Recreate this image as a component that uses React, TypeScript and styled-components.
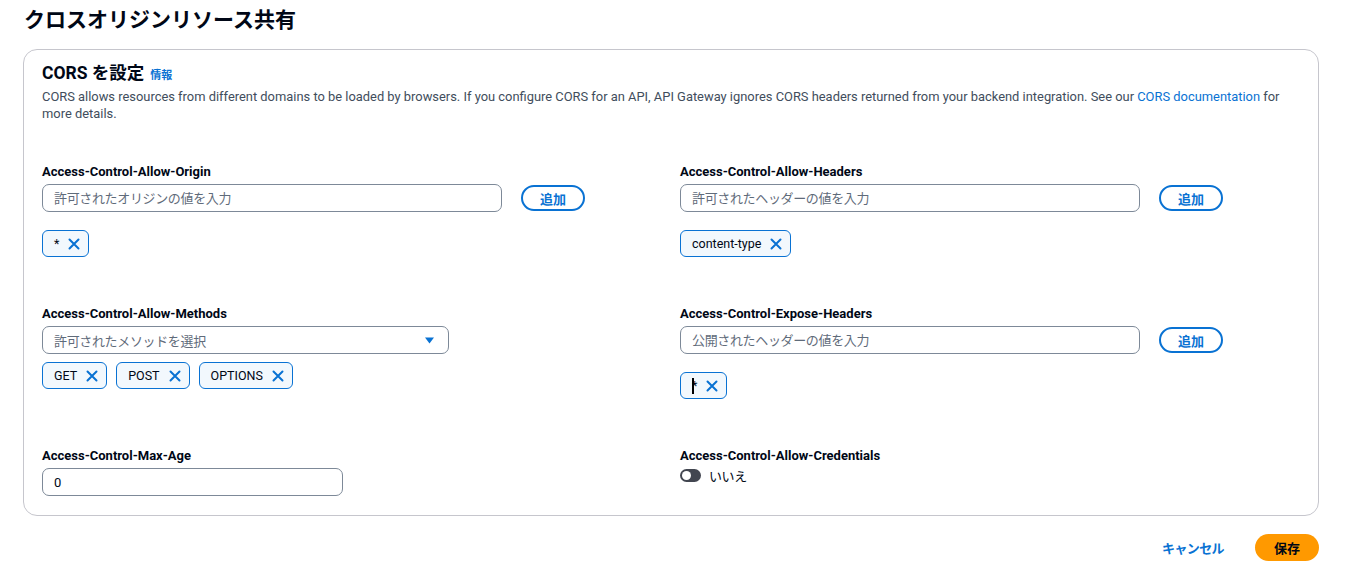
import React from "react";
import styled, { createGlobalStyle } from "styled-components";

const Global = createGlobalStyle`
  html, body { margin: 0; padding: 0; background: #ffffff; }
  body {
    font-family: Roboto, "Noto Sans CJK JP", sans-serif;
    color: #000716;
    font-size: 13px;
  }
  * { box-sizing: border-box; }
`;

const Page = styled.div`
  padding: 6px 32px 0 23px;
  width: 1351px;
`;

const PageTitle = styled.h1`
  margin: 0 0 0 1px;
  font-size: 21px;
  line-height: 28px;
  font-weight: 700;
  color: #000716;
`;

const Container = styled.section`
  margin-top: 15px;
  border: 1px solid #c6c6cd;
  border-radius: 14px;
  padding: 11px 18px 19px 18px;
`;

const HeaderRow = styled.div`
  display: flex;
  align-items: baseline;
  gap: 6px;
`;

const Heading = styled.h2`
  margin: 0;
  font-size: 17.5px;
  line-height: 24px;
  font-weight: 700;
`;

const InfoLink = styled.a`
  font-size: 11px;
  font-weight: 700;
  color: #0972d3;
  text-decoration: none;
`;

const Description = styled.p`
  margin: 3px 0 0 0;
  font-size: 12.9px;
  line-height: 17px;
  color: #414d5c;
`;

const Link = styled.a`
  color: #0972d3;
  text-decoration: none;
`;

const Grid = styled.div`
  margin-top: 41px;
  display: grid;
  grid-template-columns: 621px 1fr;
  column-gap: 17px;
  row-gap: 48px;
`;

const Field = styled.div`
  display: flex;
  flex-direction: column;
`;

const Label = styled.label`
  font-size: 13px;
  line-height: 17px;
  font-weight: 700;
  color: #000716;
  margin-bottom: 4px;
`;

const InputRow = styled.div`
  display: flex;
  align-items: center;
  gap: 19px;
`;

const TextInput = styled.input<{ $w: number }>`
  width: ${(p) => p.$w}px;
  height: 28px;
  border: 1px solid #7d8998;
  border-radius: 7px;
  padding: 0 11px;
  font-family: inherit;
  font-size: 13px;
  color: #000716;
  background: #fff;
  outline: none;
  &::placeholder { color: #5f6b7a; letter-spacing: -0.35px; }
`;

const SelectBox = styled.div<{ $w: number }>`
  width: ${(p) => p.$w}px;
  height: 28px;
  border: 1px solid #7d8998;
  border-radius: 7px;
  padding: 0 14px 0 11px;
  display: flex;
  align-items: center;
  justify-content: space-between;
  color: #5f6b7a;
  font-size: 13px;
  letter-spacing: -0.35px;
`;

const AddButton = styled.button`
  width: 64px;
  height: 26px;
  border: 2px solid #0972d3;
  border-radius: 20px;
  background: #fff;
  color: #0972d3;
  font-family: inherit;
  font-weight: 700;
  font-size: 13px;
  padding: 0;
  cursor: pointer;
`;

const TokenList = styled.div<{ $gap: number }>`
  display: flex;
  gap: 9px;
  margin-top: ${(p) => p.$gap}px;
`;

const Token = styled.div`
  position: relative;
  height: 27px;
  display: inline-flex;
  align-items: center;
  gap: 9px;
  padding: 0 8px 0 11px;
  border: 1px solid #0972d3;
  border-radius: 6px;
  background: #f2f8fd;
  font-size: 12.5px;
  color: #000716;
`;

const Dismiss = styled.button`
  border: 0;
  background: transparent;
  padding: 0;
  width: 12px;
  height: 12px;
  display: flex;
  align-items: center;
  justify-content: center;
  cursor: pointer;
`;

const Caret = styled.span`
  position: absolute;
  left: 11px;
  top: 5px;
  width: 1.5px;
  height: 16px;
  background: #000;
`;

const ToggleRow = styled.div`
  display: flex;
  align-items: center;
  gap: 8px;
  margin-top: -2px;
`;

const Toggle = styled.span`
  width: 21px;
  height: 13px;
  border-radius: 7px;
  background: #424650;
  position: relative;
  display: inline-block;
  &::after {
    content: "";
    position: absolute;
    left: 2px;
    top: 2px;
    width: 9px;
    height: 9px;
    border-radius: 50%;
    background: #fff;
  }
`;

const ToggleText = styled.span`
  font-size: 13px;
  letter-spacing: -0.4px;
  color: #000716;
`;

const Footer = styled.div`
  display: flex;
  justify-content: flex-end;
  align-items: center;
  gap: 31px;
  margin-top: 18px;
`;

const CancelButton = styled.button`
  border: 0;
  background: transparent;
  color: #0972d3;
  font-family: inherit;
  font-size: 13px;
  letter-spacing: -0.6px;
  font-weight: 700;
  padding: 0;
`;

const SaveButton = styled.button`
  width: 64px;
  height: 27px;
  border: 0;
  border-radius: 20px;
  background: #ff9900;
  color: #000716;
  font-family: inherit;
  font-size: 13px;
  font-weight: 700;
  padding: 0;
`;

const XIcon = () => (
  <svg width="12" height="12" viewBox="0 0 12 12" fill="none">
    <path d="M1.5 1.5L10.5 10.5M10.5 1.5L1.5 10.5" stroke="#0972d3" strokeWidth="2" strokeLinecap="round" />
  </svg>
);

const DownTriangle = () => (
  <svg width="9" height="7" viewBox="0 0 9 7">
    <path d="M0 0.5h9L4.5 6.5z" fill="#0972d3" />
  </svg>
);

const TokenItem = ({ label, caret }: { label: string; caret?: boolean }) => (
  <Token>
    {caret && <Caret />}
    <span>{label}</span>
    <Dismiss aria-label="remove">
      <XIcon />
    </Dismiss>
  </Token>
);

export default function App() {
  return (
    <>
      <Global />
      <Page>
        <PageTitle>クロスオリジンリソース共有</PageTitle>
        <Container>
          <HeaderRow>
            <Heading>CORS を設定</Heading>
            <InfoLink href="#">情報</InfoLink>
          </HeaderRow>
          <Description>
            <span>
              CORS allows resources from different domains to be loaded by browsers. If you configure CORS for an API,
              API Gateway ignores CORS headers returned from your backend integration. See our{" "}
            </span>
            <Link href="#">CORS documentation</Link> <span>for</span> <span>more details.</span>
          </Description>
          <Grid>
            <Field>
              <Label>Access-Control-Allow-Origin</Label>
              <InputRow>
                <TextInput $w={460} placeholder="許可されたオリジンの値を入力" />
                <AddButton>追加</AddButton>
              </InputRow>
              <TokenList $gap={18}>
                <TokenItem label="*" />
              </TokenList>
            </Field>
            <Field>
              <Label>Access-Control-Allow-Headers</Label>
              <InputRow>
                <TextInput $w={460} placeholder="許可されたヘッダーの値を入力" />
                <AddButton>追加</AddButton>
              </InputRow>
              <TokenList $gap={18}>
                <TokenItem label="content-type" />
              </TokenList>
            </Field>
            <Field>
              <Label>Access-Control-Allow-Methods</Label>
              <SelectBox $w={407}>
                <span>許可されたメソッドを選択</span>
                <DownTriangle />
              </SelectBox>
              <TokenList $gap={8}>
                <TokenItem label="GET" />
                <TokenItem label="POST" />
                <TokenItem label="OPTIONS" />
              </TokenList>
            </Field>
            <Field>
              <Label>Access-Control-Expose-Headers</Label>
              <InputRow>
                <TextInput $w={460} placeholder="公開されたヘッダーの値を入力" />
                <AddButton>追加</AddButton>
              </InputRow>
              <TokenList $gap={18}>
                <TokenItem label="*" caret />
              </TokenList>
            </Field>
            <Field>
              <Label>Access-Control-Max-Age</Label>
              <TextInput $w={301} defaultValue="0" />
            </Field>
            <Field>
              <Label>Access-Control-Allow-Credentials</Label>
              <ToggleRow>
                <Toggle />
                <ToggleText>いいえ</ToggleText>
              </ToggleRow>
            </Field>
          </Grid>
        </Container>
        <Footer>
          <CancelButton>キャンセル</CancelButton>
          <SaveButton>保存</SaveButton>
        </Footer>
      </Page>
    </>
  );
}
